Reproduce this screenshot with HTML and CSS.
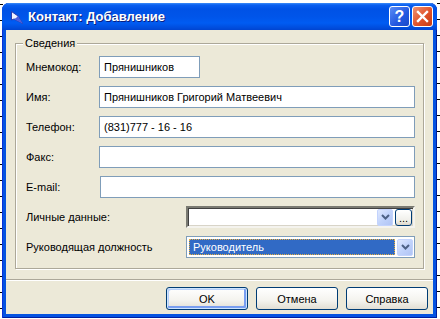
FILE: index.html
```html
<!DOCTYPE html>
<html lang="ru">
<head>
  <meta charset="UTF-8">
  <title>Контакт: Добавление</title>
  <link rel="stylesheet" href="styles.css">
</head>
<body>

<div class="window">
  <div class="titlebar">
    <svg class="app-icon" width="12" height="14" viewBox="0 0 12 14">
      <polygon points="0.5,0.5 0.5,9 3,8 11.5,12.5 7,5" fill="#f2f2ff" stroke="#2a3cb0" stroke-width="1"/>
      <polygon points="3,8 11.5,12.5 7,5 5,7" fill="#4a5ee0"/>
    </svg>
    <span class="title">Контакт: Добавление</span>
    <span class="tb-btn help">?</span>
    <span class="tb-btn close">
      <svg width="13" height="13" viewBox="0 0 13 13">
        <path d="M2 2 L11 11 M11 2 L2 11" stroke="#fff" stroke-width="2.4" stroke-linecap="square"/>
      </svg>
    </span>
  </div>

  <div class="client">
    <fieldset class="group">
      <legend>Сведения</legend>
      <div class="fields">
        <div class="row">
          <span class="lbl">Мнемокод:</span>
          <div class="edit short">Прянишников</div>
        </div>
        <div class="row">
          <span class="lbl">Имя:</span>
          <div class="edit">Прянишников Григорий Матвеевич</div>
        </div>
        <div class="row">
          <span class="lbl">Телефон:</span>
          <div class="edit">(831)777 - 16 - 16</div>
        </div>
        <div class="row">
          <span class="lbl">Факс:</span>
          <div class="edit"></div>
        </div>
        <div class="row">
          <span class="lbl">E-mail:</span>
          <div class="edit email"></div>
        </div>
        <div class="row">
          <span class="lbl wide">Личные данные:</span>
          <div class="combo sunken">
            <span class="combo-text"></span>
            <span class="drop-btn">
              <svg width="9" height="6" viewBox="0 0 9 6"><polyline points="1,1 4.5,4.5 8,1" fill="none" stroke="#4d6185" stroke-width="2"/></svg>
            </span>
            <span class="dots-btn">...</span>
          </div>
        </div>
        <div class="row">
          <span class="lbl wide">Руководящая должность</span>
          <div class="combo flat">
            <span class="combo-text selected">Руководитель</span>
            <span class="drop-btn">
              <svg width="9" height="6" viewBox="0 0 9 6"><polyline points="1,1 4.5,4.5 8,1" fill="none" stroke="#4d6185" stroke-width="2"/></svg>
            </span>
          </div>
        </div>
      </div>
    </fieldset>

    <div class="sep"></div>

    <div class="buttons">
      <button class="btn default">OK</button>
      <button class="btn">Отмена</button>
      <button class="btn">Справка</button>
    </div>
  </div>
</div>

</body>
</html>
```
FILE: styles.css
```css
* {
  box-sizing: border-box;
}

body {
  margin: 0;
  width: 440px;
  height: 319px;
  overflow: hidden;
  font-family: "Liberation Sans", Arial, sans-serif;
  font-size: 11px;
  color: #000;
  background:
    repeating-linear-gradient(to bottom, #000 0 1px, transparent 1px 16px) left 0 top 4px / 3px 100% no-repeat,
    repeating-linear-gradient(to bottom, #000 0 1px, transparent 1px 16px) right 0 top 3px / 3px 100% no-repeat,
    #fff;
}

.window {
  margin: 3px 0 0 2px;
  width: 435px;
  height: 315px;
  display: flex;
  flex-direction: column;
  background: #0553e1;
  border-radius: 7px 7px 0 0;
  box-shadow: inset 1px 0 0 #0831d9, inset -1px 0 0 #001ea0, inset 0 -1px 0 #001ea0;
}

/* title bar */

.titlebar {
  height: 27px;
  display: flex;
  align-items: center;
  padding: 0 4px 0 9px;
  border-radius: 7px 7px 0 0;
  background: linear-gradient(#3c8cf8 0, #0a5ff0 2px, #0052e6 6px, #0055ea 14px, #005cf2 20px, #004cdc 25px, #0044d0 27px);
}

.app-icon {
  flex-shrink: 0;
  margin-top: 2px;
}

.title {
  flex: 1;
  margin-left: 5px;
  color: #fff;
  font-weight: bold;
  font-size: 13px;
  text-shadow: 1px 1px 0 #0a1e80;
}

.tb-btn {
  width: 21px;
  height: 21px;
  margin-left: 2px;
  border: 1px solid #fff;
  border-radius: 3px;
  display: flex;
  align-items: center;
  justify-content: center;
  color: #fff;
}

.help {
  background: linear-gradient(135deg, #5a8cf5, #2257e0 60%, #1c48c8);
  font-weight: bold;
  font-size: 16px;
}

.close {
  background: linear-gradient(135deg, #ef9272, #e0522a 55%, #c43c14);
}

/* client area */

.client {
  flex: 1;
  margin: 0 4px 4px 4px;
  background: #ece9d8;
  display: flex;
  flex-direction: column;
}

.group {
  margin: 6px 9px 0 9px;
  padding: 6px 8px 10px 10px;
  border: 1px solid #aca899;
  box-shadow: inset 1px 1px 0 #fff, 1px 1px 0 #fff;
  min-width: 0;
}

.group legend {
  margin-left: -3px;
  padding: 0 2px;
  line-height: 14px;
  background: #ece9d8;
}

.fields {
  display: flex;
  flex-direction: column;
  gap: 8px;
}

.row {
  height: 22px;
  display: flex;
  align-items: center;
}

.lbl {
  width: 73px;
  flex-shrink: 0;
  margin-top: -1px;
}

.lbl.wide {
  width: 160px;
}

.edit {
  flex: 1;
  height: 22px;
  border: 1px solid #7f9db9;
  background: #fff;
  padding: 0 4px;
  line-height: 20px;
  white-space: nowrap;
}

.edit.short {
  flex: 0 0 101px;
}

.edit.email {
  margin-left: 1px;
}

/* combo boxes */

.combo {
  flex: 1;
  height: 22px;
  display: flex;
  align-items: center;
  background: #fff;
}

.combo.sunken {
  border-style: solid;
  border-width: 2px;
  border-color: #7a7a72 #f4f3ee #f4f3ee #7a7a72;
  box-shadow: inset 1px 1px 0 #404040, inset -1px -1px 0 #d8d4c8;
  padding: 0 1px 0 2px;
  gap: 2px;
}

.combo.flat {
  border: 1px solid #7f9db9;
  padding: 2px 1px 2px 2px;
  gap: 2px;
}

.combo-text {
  flex: 1;
  height: 100%;
  padding-left: 3px;
  line-height: 15px;
}

.combo-text.selected {
  background: #316ac5;
  color: #fff;
  border: 1px dotted #e8b040;
}

.drop-btn {
  width: 16px;
  height: 17px;
  flex-shrink: 0;
  display: flex;
  align-items: center;
  justify-content: center;
  border: 1px solid #c3d3fd;
  border-radius: 2px;
  background: linear-gradient(135deg, #e0e9fe, #c1d3fb 50%, #b0c4f4);
}

.dots-btn {
  width: 17px;
  height: 17px;
  flex-shrink: 0;
  border: 1px solid #003c74;
  border-radius: 3px;
  background: linear-gradient(#fff, #f0efea 70%, #dcd7cb);
  text-align: center;
  line-height: 17px;
  font-size: 11px;
}

/* bottom */

.sep {
  margin-top: 10px;
  border-top: 1px solid #aca899;
  border-bottom: 1px solid #fff;
}

.buttons {
  display: flex;
  justify-content: flex-end;
  gap: 8px;
  margin-top: 6px;
  padding-right: 5px;
}

.btn {
  width: 82px;
  height: 23px;
  padding: 0;
  border: 1px solid #003c74;
  border-radius: 3px;
  background: linear-gradient(#ffffff, #f4f3ee 60%, #e2ded3);
  font-family: "Liberation Sans", Arial, sans-serif;
  font-size: 11px;
  color: #000;
}

.btn.default {
  box-shadow: inset 0 0 0 1px #cde4fd, inset -2px -2px 0 1px #7a9ef0, inset 2px 2px 0 #b8d0fa;
}
```
